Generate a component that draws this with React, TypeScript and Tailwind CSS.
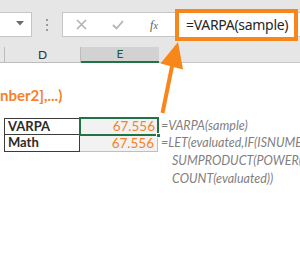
export default function App() {
  return (
    <div className="relative w-[300px] h-[255px] overflow-hidden bg-white font-['Lato',sans-serif]">
      {/* Formula bar area */}
      <div className="h-[47px] bg-[#e6e6e6] flex items-start pt-[12px]">
        <div className="shrink-0 w-[32px] h-[25px] bg-white border border-l-0 border-[#c6c6c6] flex items-center justify-end pr-[7px] pb-[2px]">
          <svg width="8" height="5" viewBox="0 0 8 5"><polygon points="0,0 8,0 4,4.5" fill="#6b6b6b" /></svg>
        </div>
        <div className="shrink-0 w-[30px] h-[25px] flex flex-col items-center justify-center gap-[3px]">
          <div className="w-[2px] h-[2px] bg-[#9a9a9a]" />
          <div className="w-[2px] h-[2px] bg-[#9a9a9a]" />
          <div className="w-[2px] h-[2px] bg-[#9a9a9a]" />
        </div>
        <div className="flex-1 h-[25px] bg-white border border-r-0 border-[#c6c6c6] flex items-center">
          <div className="w-[37px] flex justify-center">
            <svg width="11" height="11" viewBox="0 0 11 11"><path d="M1 1 L10 10 M10 1 L1 10" stroke="#b3b3b3" strokeWidth="1.6" fill="none" /></svg>
          </div>
          <div className="w-[36px] flex justify-center">
            <svg width="12" height="10" viewBox="0 0 12 10"><path d="M1 5 L4.5 8.5 L11 1" stroke="#b3b3b3" strokeWidth="1.8" fill="none" /></svg>
          </div>
          <div className="w-[36px] flex justify-center text-[12px] italic text-[#5a5a5a] font-['Liberation_Serif',serif] leading-none">
            <span>f</span><span className="text-[10px] mt-[2px]">x</span>
          </div>
        </div>
      </div>

      {/* Highlighted formula */}
      <div className="absolute left-[175px] top-[9px] w-[123px] h-[32px] border-[4px] border-[#f7861b] bg-white flex items-center pl-[7px]">
        <span className="text-[14px] text-[#262626] font-['Noto_Sans',sans-serif] leading-none tracking-[-0.3px] whitespace-nowrap">=VARPA(sample)</span>
      </div>

      {/* Column headers */}
      <div className="h-[16px] flex bg-[#e6e6e6] text-[12px] leading-none">
        <div className="shrink-0 w-[5px] border-r border-b border-[#bcbcbc]" />
        <div className="shrink-0 w-[76px] border-r border-b border-[#bcbcbc] flex items-center justify-center text-[#333]">D</div>
        <div className="shrink-0 w-[78px] bg-[#d2d2d2] border-b-2 border-[#217346] flex items-center justify-center text-[#1e5b3a]">E</div>
        <div className="flex-1 border-b border-[#c6c6c6]" />
      </div>

      {/* Sheet */}
      <div className="pt-[24px]">
        <div className="h-[16px] text-[15px] font-bold text-[#f5822a] leading-[16px] whitespace-nowrap">nber2],...)</div>
        <div className="mt-[15px] flex flex-col">
          <div className="flex h-[17px] items-stretch">
            <div className="shrink-0 w-[4px]" />
            <div className="shrink-0 w-[76px] border border-[#3b3b3b] flex items-center pl-[3px] text-[13px] font-bold text-[#2b2b2b]">VARPA</div>
            <div className="shrink-0 relative w-[78px] bg-[#f2f2f2] flex items-center justify-end pr-[3px] text-[13.5px] text-[#f5822a]">
              67.556
              <div className="absolute -left-[1px] -top-[1px] w-[80px] h-[19px] border-2 border-[#217346]" />
              <div className="absolute -right-[3px] -bottom-[3px] w-[5px] h-[5px] bg-[#217346] border border-white" />
            </div>
            <div className="shrink-0 pl-[3px] flex items-center text-[12.5px] italic text-[#7f7f7f] whitespace-nowrap">=VARPA(sample)</div>
          </div>
          <div className="flex h-[17px] items-stretch">
            <div className="shrink-0 w-[4px]" />
            <div className="shrink-0 w-[76px] border border-t-0 border-[#3b3b3b] flex items-center pl-[3px] text-[13px] font-bold text-[#2b2b2b]">Math</div>
            <div className="shrink-0 w-[78px] bg-[#f2f2f2] border-b border-r border-[#bfbfbf] flex items-center justify-end pr-[3px] text-[13.5px] text-[#f5822a]">67.556</div>
            <div className="shrink-0 pl-[3px] flex items-center text-[12.5px] italic text-[#7f7f7f] whitespace-nowrap">=LET(evaluated,IF(ISNUMBER(sample),sample,0),</div>
          </div>
          <div className="h-[18px] pl-[172px] flex items-center text-[12.5px] italic text-[#7f7f7f] whitespace-nowrap">SUMPRODUCT(POWER(AVERAGE(evaluated)</div>
          <div className="h-[18px] pl-[172px] flex items-center text-[12.5px] italic text-[#7f7f7f] whitespace-nowrap">COUNT(evaluated))</div>
        </div>
      </div>

      {/* Arrow */}
      <svg className="absolute left-0 top-0 pointer-events-none" width="300" height="255" viewBox="0 0 300 255">
        <line x1="162.5" y1="113" x2="172.5" y2="64" stroke="#f7861b" strokeWidth="4" />
        <polygon points="178,42 160.5,63.5 183,69.5" fill="#f7861b" />
      </svg>
    </div>
  );
}
